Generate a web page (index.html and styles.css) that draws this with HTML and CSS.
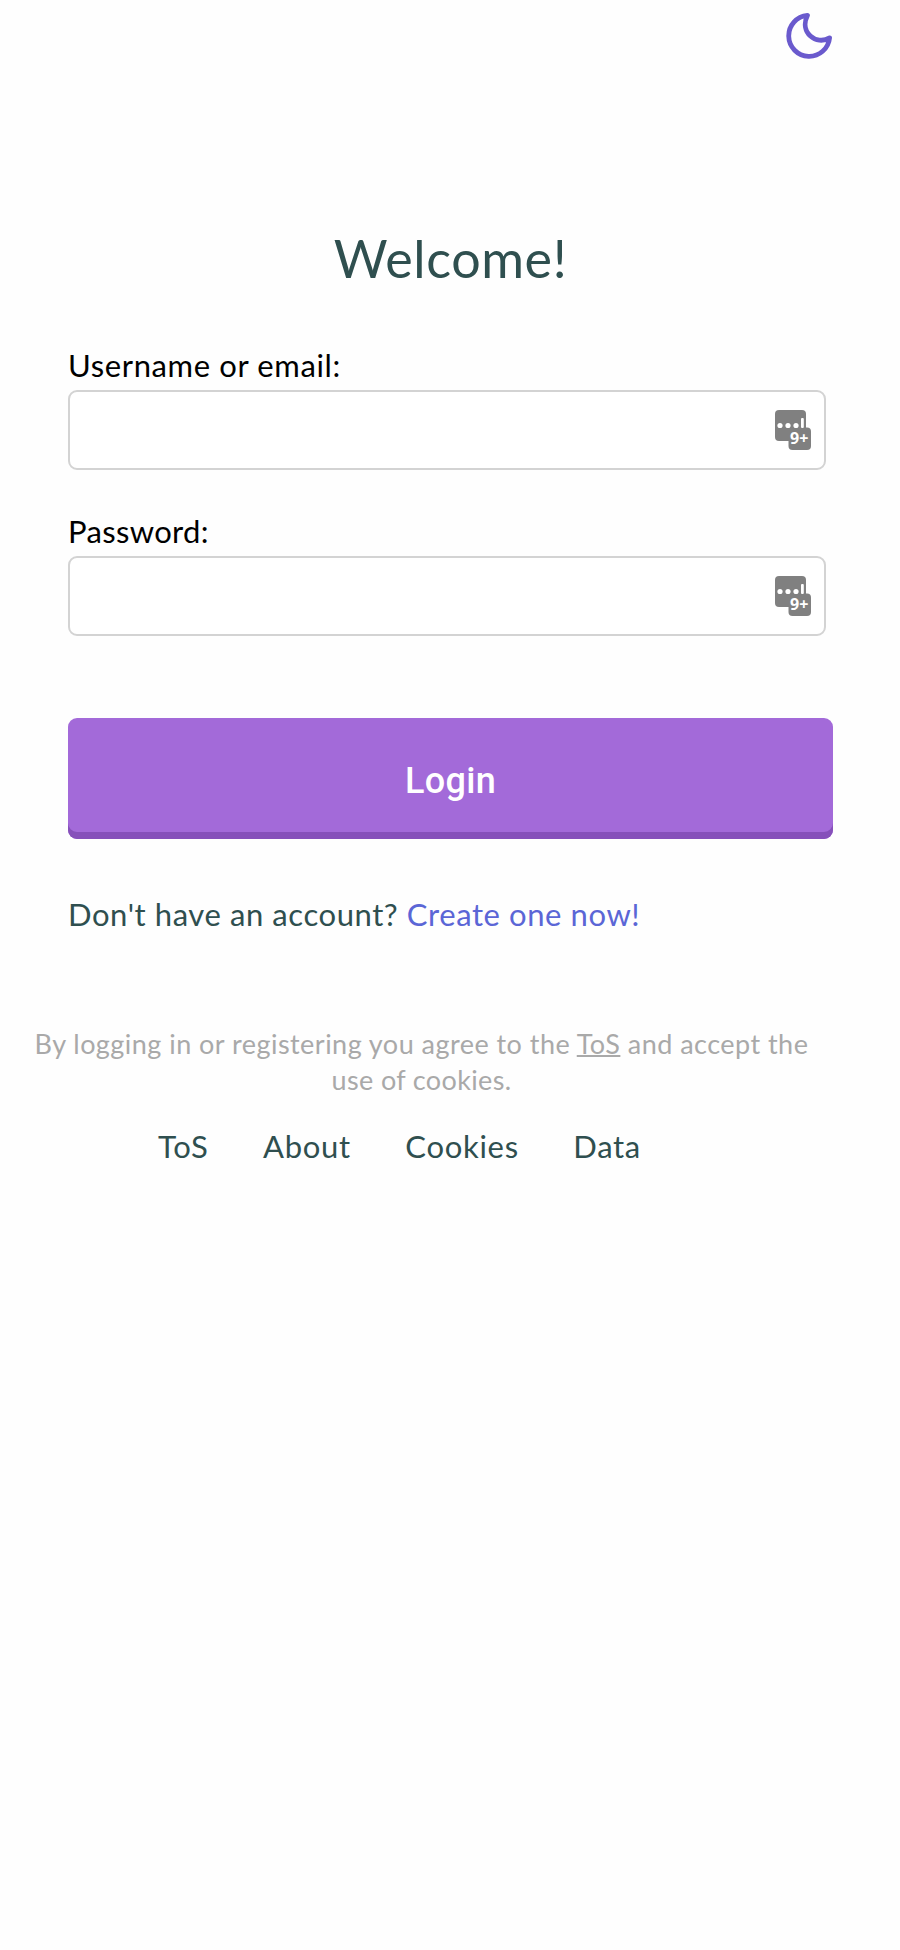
FILE: index.html
```html
<!DOCTYPE html>
<html lang="en">
<head>
<meta charset="utf-8">
<meta name="viewport" content="width=device-width">
<title>Login</title>
<link rel="stylesheet" href="styles.css">
</head>
<body>
<header class="topbar">
  <svg class="moon" width="46" height="46" viewBox="0 0 44 44" aria-label="Dark mode">
    <path d="M20.500 2.300A19.600 19.600 0 1 0 41.700 23.800C29 31.500 12.500 18.500 20.500 2.300Z"/>
  </svg>
</header>
<main class="login">
  <h1 class="title">Welcome!</h1>
  <form class="form">
    <label class="label label-user" for="user">Username or email:</label>
    <div class="field">
      <input class="input" id="user" type="text">
      <svg class="manager" width="38" height="42" viewBox="0 0 38 42">
        <rect class="badge" x="1" y="1" width="31" height="31" rx="4"/>
        <rect class="badge" x="14.500" y="18.500" width="22.500" height="22.500" rx="4"/>
        <g class="mark"><circle cx="6" cy="16.500" r="2.600"/><circle cx="14" cy="16.500" r="2.600"/><circle cx="22" cy="16.500" r="2.600"/><rect x="27" y="9" width="2.800" height="10" rx="1"/></g>
        <text class="count" x="16" y="35">9+</text>
      </svg>
    </div>
    <label class="label label-pass" for="pass">Password:</label>
    <div class="field">
      <input class="input" id="pass" type="password">
      <svg class="manager" width="38" height="42" viewBox="0 0 38 42">
        <rect class="badge" x="1" y="1" width="31" height="31" rx="4"/>
        <rect class="badge" x="14.500" y="18.500" width="22.500" height="22.500" rx="4"/>
        <g class="mark"><circle cx="6" cy="16.500" r="2.600"/><circle cx="14" cy="16.500" r="2.600"/><circle cx="22" cy="16.500" r="2.600"/><rect x="27" y="9" width="2.800" height="10" rx="1"/></g>
        <text class="count" x="16" y="35">9+</text>
      </svg>
    </div>
    <button class="submit" type="button">Login</button>
  </form>
  <p class="account">Don't have an account? <a class="create" href="#">Create one now!</a></p>
</main>
<p class="terms">By logging in or registering you agree to the <a class="terms-link" href="#">ToS</a> and accept the<br><span class="terms-end">use of cookies.</span></p>
<footer class="footer">
  <a class="link" href="#">ToS</a>
  <a class="link" href="#">About</a>
  <a class="link" href="#">Cookies</a>
  <a class="link" href="#">Data</a>
</footer>
</body>
</html>
```
FILE: styles.css
```css
* { box-sizing: border-box; }
body {
  margin: 0;
  min-height: 1950px;
  background: #fefefe;
  font-family: Lato, sans-serif;
  color: #2f4f4f;
}
a { color: inherit; text-decoration: none; }
.topbar {
  display: flex;
  justify-content: flex-end;
  height: 227px;
  padding: 13px 68px 0 0;
}
.moon path {
  fill: none;
  stroke: #6a5acd;
  stroke-width: 4.6;
  stroke-linejoin: round;
}
.login { padding: 0 67px 0 68px; }
.title {
  margin: 0 0 57px;
  font-size: 52px;
  line-height: 62px;
  font-weight: 400;
  letter-spacing: 0.6px;
  text-align: center;
}
.form { display: flex; flex-direction: column; }
.label {
  margin-bottom: 5px;
  font-size: 31px;
  line-height: 39px;
  letter-spacing: 0.63px;
  color: #000;
}
.label-pass { margin-top: 42px; letter-spacing: 0.33px; }
.field { position: relative; width: 758px; height: 80px; }
.input {
  display: block;
  width: 100%;
  height: 100%;
  padding: 0 60px 0 16px;
  border: 2px solid #d3d3d3;
  border-radius: 9px;
  background: #fff;
  font: inherit;
  outline: none;
}
.manager { position: absolute; right: 14px; top: 19px; }
.badge { fill: #808080; }
.mark, .count { fill: #fff; }
.count { font: 700 16px "Open Sans", sans-serif; }
.submit {
  height: 121px;
  margin-top: 82px;
  padding: 4px 0 0;
  border: 0;
  border-radius: 9px;
  background: #a36ad9;
  box-shadow: inset 0 -7px 0 #8650ba;
  color: #fff;
  font: 500 36px Roboto, sans-serif;
  letter-spacing: 0.3px;
}
.account {
  margin: 56px 0 0;
  font-size: 31px;
  line-height: 38px;
  letter-spacing: 0.58px;
  white-space: nowrap;
}
.create { color: #5b66d6; }
.terms {
  width: 843px;
  margin: 93px 0 29px;
  font-size: 27px;
  line-height: 36px;
  letter-spacing: 0.47px;
  text-align: center;
  white-space: nowrap;
  color: #a9a9a9;
}
.terms-end { letter-spacing: 0.35px; }
.terms-link { text-decoration: underline; text-decoration-thickness: 2px; }
.footer {
  display: flex;
  gap: 54.5px;
  padding-left: 158px;
  font-size: 31px;
  line-height: 38px;
  letter-spacing: 0.7px;
}
```
